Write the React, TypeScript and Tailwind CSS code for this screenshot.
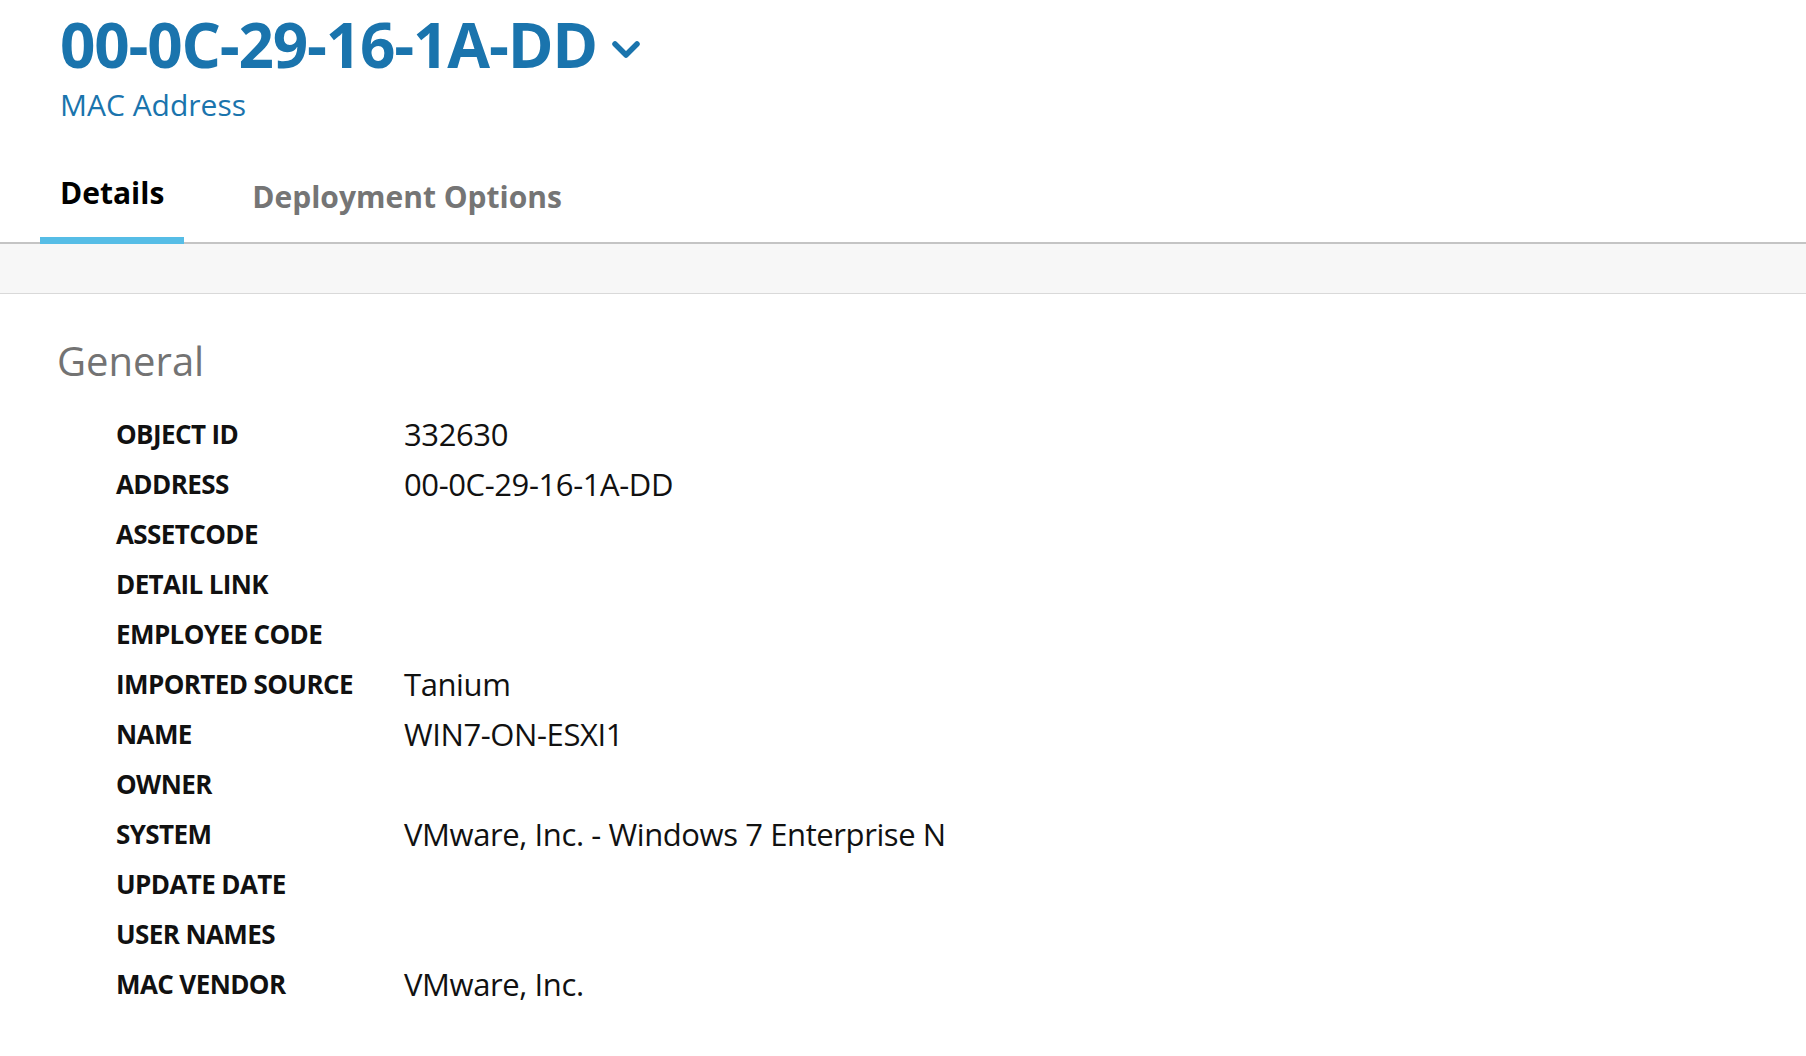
import React from "react";

const rows: [string, string][] = [
  ["OBJECT ID", "332630"],
  ["ADDRESS", "00-0C-29-16-1A-DD"],
  ["ASSETCODE", ""],
  ["DETAIL LINK", ""],
  ["EMPLOYEE CODE", ""],
  ["IMPORTED SOURCE", "Tanium"],
  ["NAME", "WIN7-ON-ESXI1"],
  ["OWNER", ""],
  ["SYSTEM", "VMware, Inc. - Windows 7 Enterprise N"],
  ["UPDATE DATE", ""],
  ["USER NAMES", ""],
  ["MAC VENDOR", "VMware, Inc."],
];

export default function App() {
  return (
    <div className="min-h-screen w-full bg-white font-['Open_Sans',sans-serif]">
      <div className="pl-[60px] pt-[14px]">
        <div className="flex h-[60px] items-center">
          <h1 className="text-[62px] font-bold leading-none tracking-[-1.2px] text-[#1a74ad]">
            00-0C-29-16-1A-DD
          </h1>
          <svg
            className="ml-[13px] mt-[12px]"
            width="32"
            height="24"
            viewBox="0 0 32 24"
            fill="none"
          >
            <path
              d="M5 6 L16 17 L27 6"
              stroke="#1a74ad"
              strokeWidth="5.5"
              strokeLinecap="round"
              strokeLinejoin="round"
            />
          </svg>
        </div>
        <div className="mt-[13px] text-[30px] leading-[36px] text-[#1a74ad]">MAC Address</div>
      </div>

      <div className="mt-[28px] flex h-[93px] items-end border-b-2 border-[#c4c4c4] pl-[40px]">
        <div className="-mb-[2px] border-b-[7px] border-[#56bde6] px-[20px] pb-[24px] text-[30px] font-bold leading-[40px] text-black">
          Details
        </div>
        <div className="ml-[48px] px-[20px] pb-[25px] text-[30px] font-bold leading-[40px] text-[#757575]">
          Deployment Options
        </div>
      </div>

      <div className="h-[50px] border-b border-[#d9d9d9] bg-[#f7f7f7]" />

      <div className="pl-[57px]">
        <div className="mt-[43px] text-[40px] leading-[48px] text-[#737373]">General</div>
        <div className="mt-[24px] pl-[59px]">
          {rows.map(([k, v]) => (
            <div key={k} className="flex h-[50px] items-center">
              <div className="w-[288px] text-[26px] font-bold leading-none tracking-[-0.6px] text-[#111]">
                {k}
              </div>
              <div className="text-[31px] leading-none tracking-[-0.4px] text-[#111]">{v}</div>
            </div>
          ))}
        </div>
      </div>
    </div>
  );
}
